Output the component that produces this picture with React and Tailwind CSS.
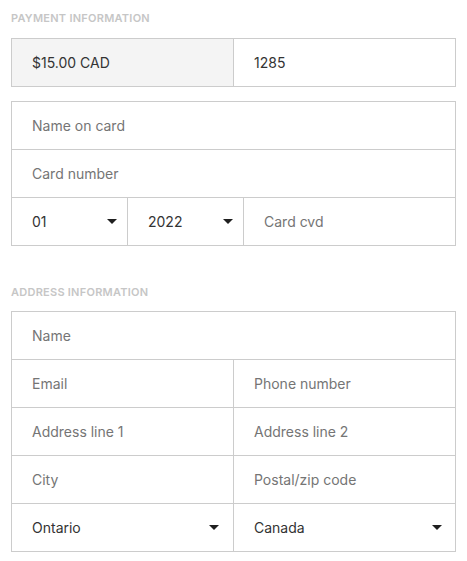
import React from "react";

const Arrow = () => (
  <svg width="10" height="5" viewBox="0 0 10 5" className="shrink-0">
    <path d="M0 0 L10 0 L5 5 Z" fill="#1f1f1f" />
  </svg>
);

const Cell = ({ children, className = "", value }) => (
  <div
    className={`flex h-[47px] items-center px-5 text-[14px] ${value ? "text-[#333333]" : "text-[#757575]"} ${className}`}
  >
    {children}
  </div>
);

const Select = ({ label, className = "", pr = "pr-[10px]" }) => (
  <div className={`flex h-[47px] items-center justify-between pl-5 ${pr} text-[14px] text-[#333333] ${className}`}>
    <span>{label}</span>
    <Arrow />
  </div>
);

const Header = ({ children, className = "" }) => (
  <div className={`text-[11px] font-semibold uppercase tracking-[0.25px] text-[#c6c6c6] ${className}`}>
    {children}
  </div>
);

export default function App() {
  return (
    <div
      className="min-h-[561px] w-[467px] bg-white px-[11px] pt-[11px]"
      style={{ fontFamily: "Inter, 'Noto Sans', Arial, sans-serif" }}
    >
      <Header className="h-[27px] leading-[14px]">Payment information</Header>

      <div className="grid w-[445px] grid-cols-[221px_1fr] border border-[#cccccc]">
        <Cell value className="bg-[#f4f4f4]">$15.00 CAD</Cell>
        <Cell value className="border-l border-[#cccccc]">1285</Cell>
      </div>

      <div className="mt-[14px] w-[445px] border border-[#cccccc]">
        <Cell>Name on card</Cell>
        <div className="border-t border-[#cccccc]">
          <Cell>Card number</Cell>
        </div>
        <div className="grid grid-cols-[115px_116px_1fr] border-t border-[#cccccc]">
          <Select label="01" />
          <Select label="2022" className="border-l border-[#cccccc]" />
          <Cell className="border-l border-[#cccccc]">Card cvd</Cell>
        </div>
      </div>

      <Header className="mt-[39px] h-[26px] leading-[14px]">Address information</Header>

      <div className="w-[445px] border border-[#cccccc]">
        <Cell>Name</Cell>
        <div className="grid grid-cols-[221px_1fr] border-t border-[#cccccc]">
          <Cell>Email</Cell>
          <Cell className="border-l border-[#cccccc]">Phone number</Cell>
        </div>
        <div className="grid grid-cols-[221px_1fr] border-t border-[#cccccc]">
          <Cell>Address line 1</Cell>
          <Cell className="border-l border-[#cccccc]">Address line 2</Cell>
        </div>
        <div className="grid grid-cols-[221px_1fr] border-t border-[#cccccc]">
          <Cell>City</Cell>
          <Cell className="border-l border-[#cccccc]">Postal/zip code</Cell>
        </div>
        <div className="grid grid-cols-[221px_1fr] border-t border-[#cccccc]">
          <Select label="Ontario" pr="pr-[14px]" />
          <Select label="Canada" pr="pr-[13px]" className="border-l border-[#cccccc]" />
        </div>
      </div>
    </div>
  );
}
